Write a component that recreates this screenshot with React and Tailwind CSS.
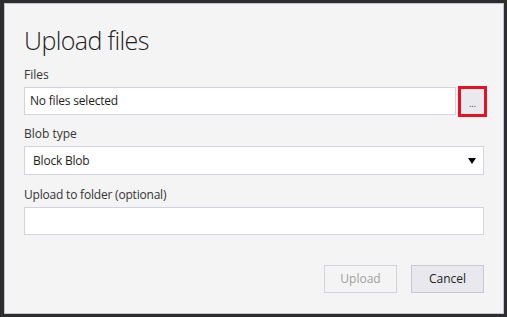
export default function App() {
  return (
    <div className="w-[507px] h-[317px] bg-[#2d2d2d] pt-[3px] pl-[4px] overflow-hidden">
      <div className="w-[500px] h-[311px] bg-[#f4f4f4] border border-[#c4c4d4] px-[19px] pt-[20px] flex flex-col font-['Open_Sans',sans-serif] text-[#1e1e1e]">
        <h1 className="text-[25px] leading-[32px] font-light tracking-[-0.6px]">Upload files</h1>
        <label className="mt-[11px] text-[12px] leading-[16px] text-[#333]">Files</label>
        <div className="mt-[4px] flex items-center">
          <div className="flex-1 h-[28px] bg-white border border-[#d3d3de] pl-[5px] flex items-center text-[12px] leading-[16px] tracking-[-0.2px]">No files selected</div>
          <button className="ml-[2px] -mr-[3px] w-[29px] h-[31px] -my-[2px] border-[3px] border-[#e81123] bg-[#e9e9ee] flex items-center justify-center text-[9px] leading-[9px] pt-[4px] text-[#333]">...</button>
        </div>
        <label className="mt-[11px] text-[12px] leading-[16px] text-[#333]">Blob type</label>
        <div className="mt-[4px] h-[29px] bg-white border border-[#d3d3de] pl-[8px] pr-[7px] flex items-center justify-between text-[12px] leading-[16px]">
          <span className="tracking-[-0.2px]">Block Blob</span>
          <svg width="8" height="6" viewBox="0 0 8 6"><path d="M0 0 H8 L4 6 Z" fill="#000" /></svg>
        </div>
        <label className="mt-[12px] text-[12px] leading-[16px] text-[#333] tracking-[-0.2px]">Upload to folder (optional)</label>
        <div className="mt-[4px] h-[28px] bg-white border border-[#d3d3de]"></div>
        <div className="mt-[30px] flex justify-end gap-[14px]">
          <button className="w-[73px] h-[28px] border border-[#d3d3de] text-[12px] text-[#a0a0a0] bg-transparent">Upload</button>
          <button className="w-[73px] h-[28px] border border-[#c8c8d4] bg-[#e8e8ee] text-[12px] text-[#222]">Cancel</button>
        </div>
      </div>
    </div>
  );
}
